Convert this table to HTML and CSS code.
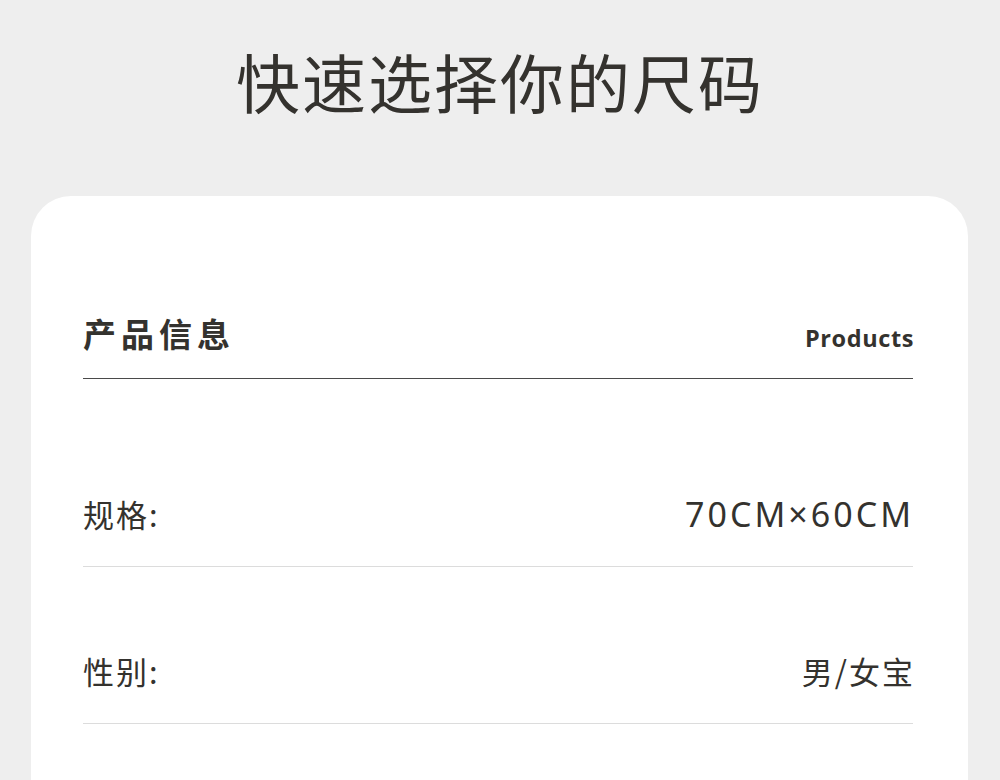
FILE: index.html
```html
<!DOCTYPE html>
<html lang="zh-CN">
<head>
    <meta charset="UTF-8">
    <meta name="viewport" content="width=device-width, initial-scale=1.0">
    <title>快速选择你的尺码</title>
    <link rel="stylesheet" href="styles.css">
</head>
<body>
    <div class="page">
        <h1 class="page-title">快速选择你的尺码</h1>
        <div class="info-card">
            <div class="info-head">
                <h2 class="info-title">产品信息</h2>
                <span class="info-sub">Products</span>
            </div>
            <div class="info-row first">
                <span class="row-label">规格:</span>
                <span class="row-value num">70CM×60CM</span>
            </div>
            <div class="info-row">
                <span class="row-label">性别:</span>
                <span class="row-value">男/女宝</span>
            </div>
        </div>
    </div>
</body>
</html>
```

FILE: styles.css
```css
html, body {
    margin: 0;
    padding: 0;
    background-color: #eeeeee;
    color: #34322e;
    font-family: "Noto Sans CJK SC", "Noto Sans", sans-serif;
}
.page {
    width: 1000px;
    height: 780px;
    overflow: hidden;
}
.page-title {
    margin: 0;
    padding-top: 40px;
    font-size: 64px;
    line-height: 80px;
    font-weight: 400;
    letter-spacing: 2px;
    text-align: center;
}
.info-card {
    margin: 76px 32px 0 31px;
    padding: 0 55px 0 52px;
    background-color: #fff;
    border-radius: 40px;
    height: 700px;
}
.info-head {
    display: flex;
    justify-content: space-between;
    align-items: baseline;
    padding-top: 117px;
    padding-bottom: 24px;
    border-bottom: 1.5px solid #4a4a4a;
}
.info-title {
    margin: 0;
    font-size: 33px;
    line-height: 40px;
    font-weight: 700;
    letter-spacing: 5px;
}
.info-sub {
    font-family: "Open Sans", "Noto Sans", sans-serif;
    font-size: 23.5px;
    font-weight: 700;
    letter-spacing: 0.6px;
    margin-right: -1px;
}
.info-row {
    display: flex;
    justify-content: space-between;
    align-items: center;
    padding: 86px 0 34px;
    line-height: 36px;
    border-bottom: 1px solid #dcdcdc;
}
.info-row.first {
    margin-top: 31px;
}
.row-label {
    font-size: 31px;
    letter-spacing: 2px;
}
.row-value {
    font-size: 31px;
    letter-spacing: 2px;
    margin-right: -2px;
}
.row-value.num {
    font-family: "Noto Sans", "Noto Sans CJK SC", sans-serif;
    font-size: 34px;
    letter-spacing: 3px;
    margin-right: -1px;
}
```
